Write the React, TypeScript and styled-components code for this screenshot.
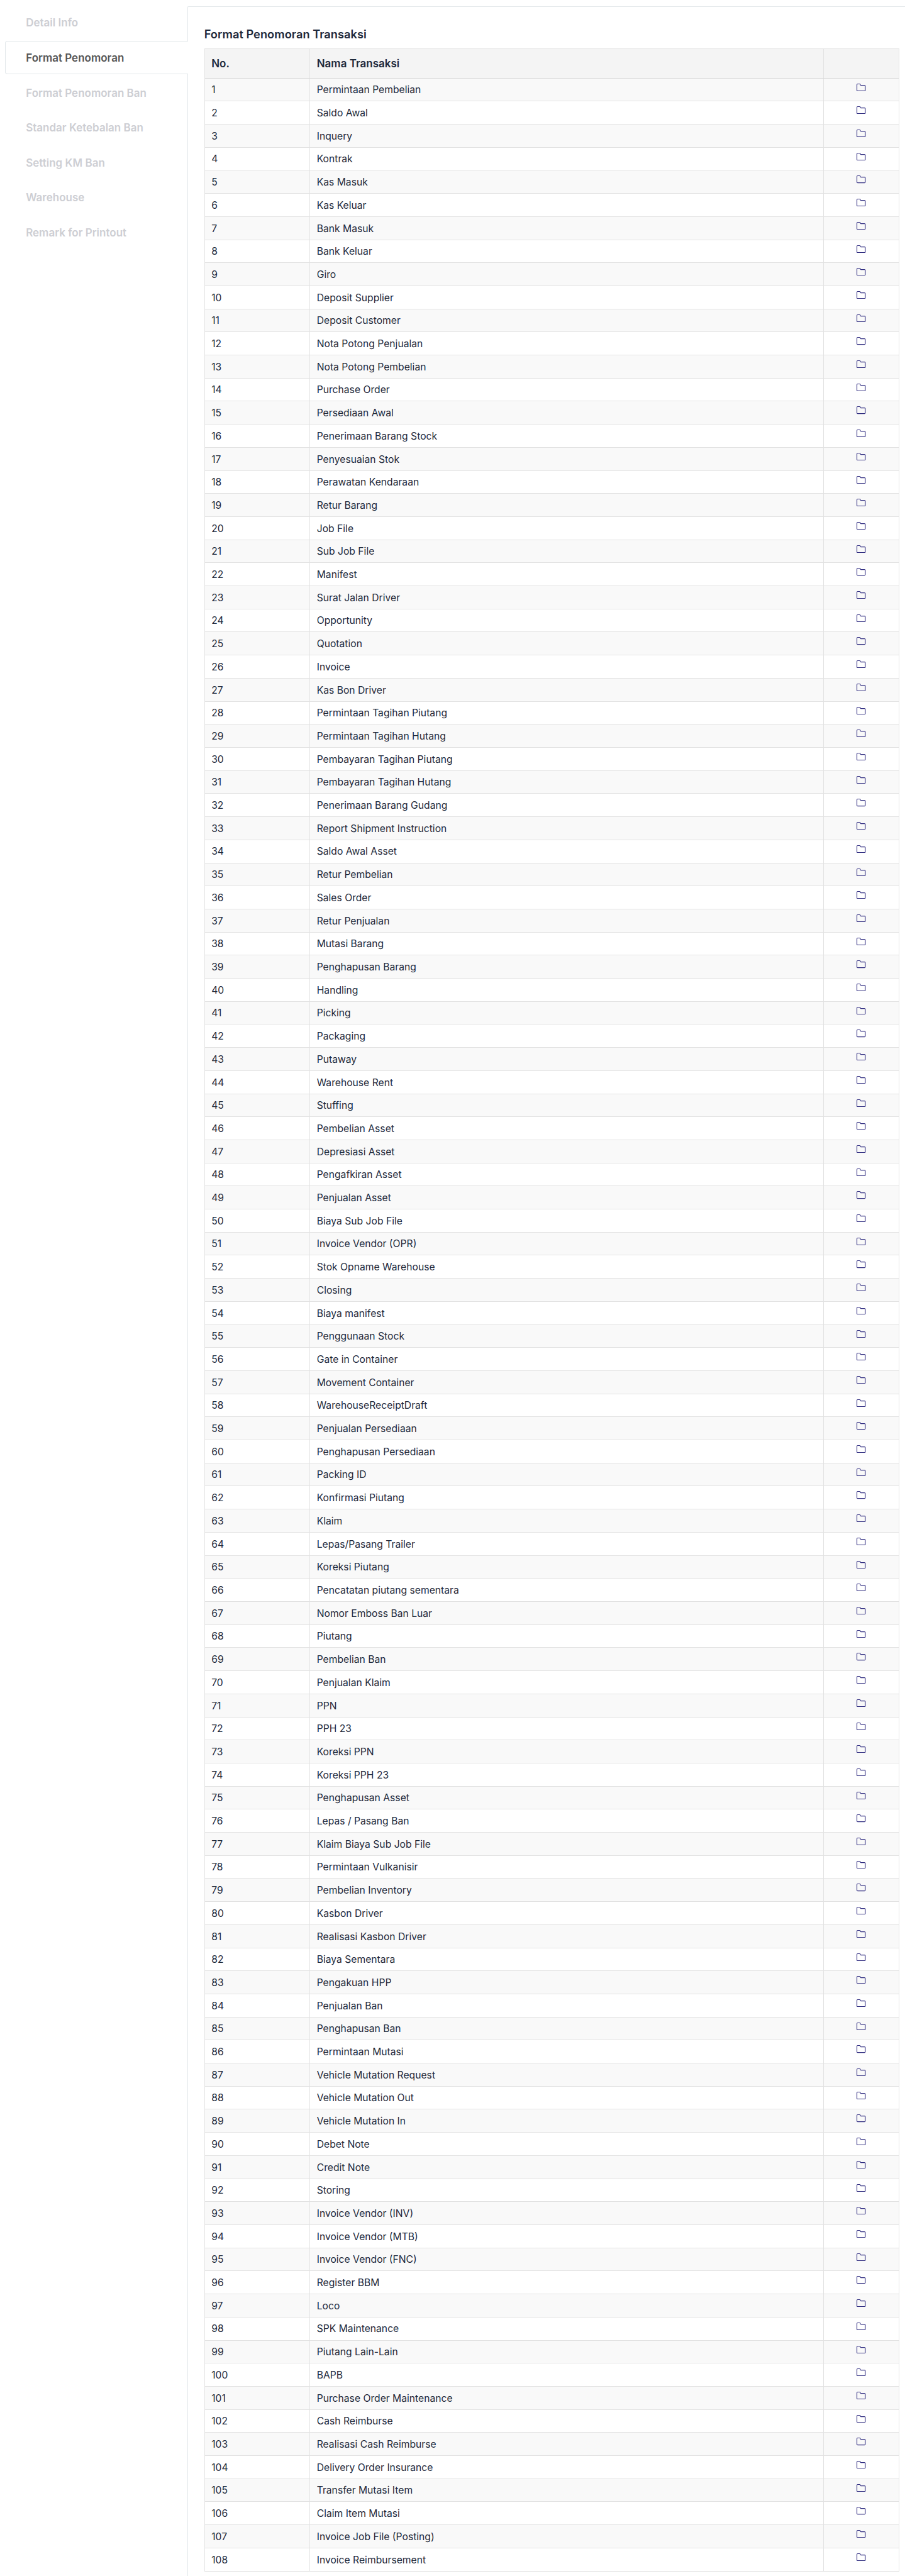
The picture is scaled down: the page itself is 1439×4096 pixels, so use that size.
import React from "react";
import styled, { createGlobalStyle } from "styled-components";

const Global = createGlobalStyle`
  *, *::before, *::after { box-sizing: border-box; }
  body {
    margin: 0;
    background: #fff;
    color: #1e293b;
    font-family: Inter, "Liberation Sans", sans-serif;
  }
`;

const Page = styled.div`
  display: flex;
  width: 1439px;
  height: 4096px;
  overflow: hidden;
`;

const Nav = styled.nav`
  display: flex;
  flex-direction: column;
  flex: none;
  gap: 2.8px;
  width: 298px;
  padding: 9.6px 0 0 7.6px;
`;

const NavItem = styled.a<{ $active?: boolean }>`
  display: flex;
  align-items: center;
  height: 52.8px;
  padding: 0.8px 0 0 32.6px;
  font-size: 17px;
  font-weight: 600;
  line-height: 24px;
  color: ${(p) => (p.$active ? "#555" : "#cdced3")};
  background: #fff;
  border: 1px solid ${(p) => (p.$active ? "#e2e7ea" : "transparent")};
  border-right: 0;
  border-radius: 4px 0 0 4px;
  position: relative;
  z-index: ${(p) => (p.$active ? 1 : 0)};
  margin-right: ${(p) => (p.$active ? "-1px" : "0")};
`;

const Panel = styled.main`
  flex: 1;
  margin-top: 10px;
  padding: 36px 9px 0 26px;
  border: 1px solid #e2e7ea;
  border-width: 1px 0 0 1px;
  border-top-left-radius: 2px;
`;

const Title = styled.h1`
  margin: 0 0 0 -0.3px;
  height: 30px;
  font-size: 18.3px;
  font-weight: 600;
  line-height: 14px;
`;

const Table = styled.div`
  border: 1px solid #e4e4e4;
  border-bottom: 0;
`;

const Row = styled.div<{ $striped?: boolean }>`
  display: grid;
  grid-template-columns: 166px 1fr 120px;
  height: 36.717px;
  background: ${(p) => (p.$striped ? "#f9f9f9" : "#fff")};
  border-bottom: 1px solid #e2e2e2;
`;

const HeadRow = styled(Row)`
  height: 46.6px;
  background: #f4f4f4;
  border-bottom-color: #d8d8d8;
  font-weight: 600;
`;

const Cell = styled.div`
  padding: 8.7px 0 0 10.2px;
  font-size: 15.68px;
  line-height: 20px;
  white-space: nowrap;

  & + & {
    padding-left: 10.7px;
    border-left: 1px solid #e4e4e4;
  }
`;

const HeadCell = styled(Cell)`
  padding-top: 13px;
  font-size: 17px;
  line-height: 20px;
`;

const IconCell = styled.div`
  display: flex;
  justify-content: center;
  align-items: flex-start;
  padding-top: 8px;
  border-left: 1px solid #e4e4e4;
`;

const FolderIcon = () => (
  <svg width="14.4" height="12.2" viewBox="0 0 66 56" fill="none" stroke="#312e81" strokeWidth="5" strokeLinejoin="round">
    <path d="M8 2.5H23Q27.5 2.5 27.5 7V8Q27.5 12 31 12H58Q63.5 12 63.5 17.5V48Q63.5 53.5 58 53.5H8Q2.5 53.5 2.5 48V8Q2.5 2.5 8 2.5Z" />
  </svg>
);

const tabs = [
  "Detail Info",
  "Format Penomoran",
  "Format Penomoran Ban",
  "Standar Ketebalan Ban",
  "Setting KM Ban",
  "Warehouse",
  "Remark for Printout",
];

const transactions = [
  "Permintaan Pembelian", "Saldo Awal", "Inquery", "Kontrak", "Kas Masuk", "Kas Keluar", "Bank Masuk", "Bank Keluar",
  "Giro", "Deposit Supplier", "Deposit Customer", "Nota Potong Penjualan", "Nota Potong Pembelian", "Purchase Order",
  "Persediaan Awal", "Penerimaan Barang Stock", "Penyesuaian Stok", "Perawatan Kendaraan", "Retur Barang", "Job File",
  "Sub Job File", "Manifest", "Surat Jalan Driver", "Opportunity", "Quotation", "Invoice", "Kas Bon Driver",
  "Permintaan Tagihan Piutang", "Permintaan Tagihan Hutang", "Pembayaran Tagihan Piutang", "Pembayaran Tagihan Hutang",
  "Penerimaan Barang Gudang", "Report Shipment Instruction", "Saldo Awal Asset", "Retur Pembelian", "Sales Order",
  "Retur Penjualan", "Mutasi Barang", "Penghapusan Barang", "Handling", "Picking", "Packaging", "Putaway",
  "Warehouse Rent", "Stuffing", "Pembelian Asset", "Depresiasi Asset", "Pengafkiran Asset", "Penjualan Asset",
  "Biaya Sub Job File", "Invoice Vendor (OPR)", "Stok Opname Warehouse", "Closing", "Biaya manifest",
  "Penggunaan Stock", "Gate in Container", "Movement Container", "WarehouseReceiptDraft", "Penjualan Persediaan",
  "Penghapusan Persediaan", "Packing ID", "Konfirmasi Piutang", "Klaim", "Lepas/Pasang Trailer", "Koreksi Piutang",
  "Pencatatan piutang sementara", "Nomor Emboss Ban Luar", "Piutang", "Pembelian Ban", "Penjualan Klaim", "PPN",
  "PPH 23", "Koreksi PPN", "Koreksi PPH 23", "Penghapusan Asset", "Lepas / Pasang Ban", "Klaim Biaya Sub Job File",
  "Permintaan Vulkanisir", "Pembelian Inventory", "Kasbon Driver", "Realisasi Kasbon Driver", "Biaya Sementara",
  "Pengakuan HPP", "Penjualan Ban", "Penghapusan Ban", "Permintaan Mutasi", "Vehicle Mutation Request",
  "Vehicle Mutation Out", "Vehicle Mutation In", "Debet Note", "Credit Note", "Storing", "Invoice Vendor (INV)",
  "Invoice Vendor (MTB)", "Invoice Vendor (FNC)", "Register BBM", "Loco", "SPK Maintenance", "Piutang Lain-Lain",
  "BAPB", "Purchase Order Maintenance", "Cash Reimburse", "Realisasi Cash Reimburse", "Delivery Order Insurance",
  "Transfer Mutasi Item", "Claim Item Mutasi", "Invoice Job File (Posting)", "Invoice Reimbursement",
];

export default function App() {
  return (
    <Page>
      <Global />
      <Nav>
        {tabs.map((tab) => (
          <NavItem key={tab} $active={tab === "Format Penomoran"}>{tab}</NavItem>
        ))}
      </Nav>
      <Panel>
        <Title>Format Penomoran Transaksi</Title>
        <Table>
          <HeadRow>
            <HeadCell>No.</HeadCell>
            <HeadCell>Nama Transaksi</HeadCell>
            <HeadCell />
          </HeadRow>
          {transactions.map((name, i) => (
            <Row key={name} $striped={i % 2 === 0}>
              <Cell>{i + 1}</Cell>
              <Cell>{name}</Cell>
              <IconCell><FolderIcon /></IconCell>
            </Row>
          ))}
        </Table>
      </Panel>
    </Page>
  );
}
